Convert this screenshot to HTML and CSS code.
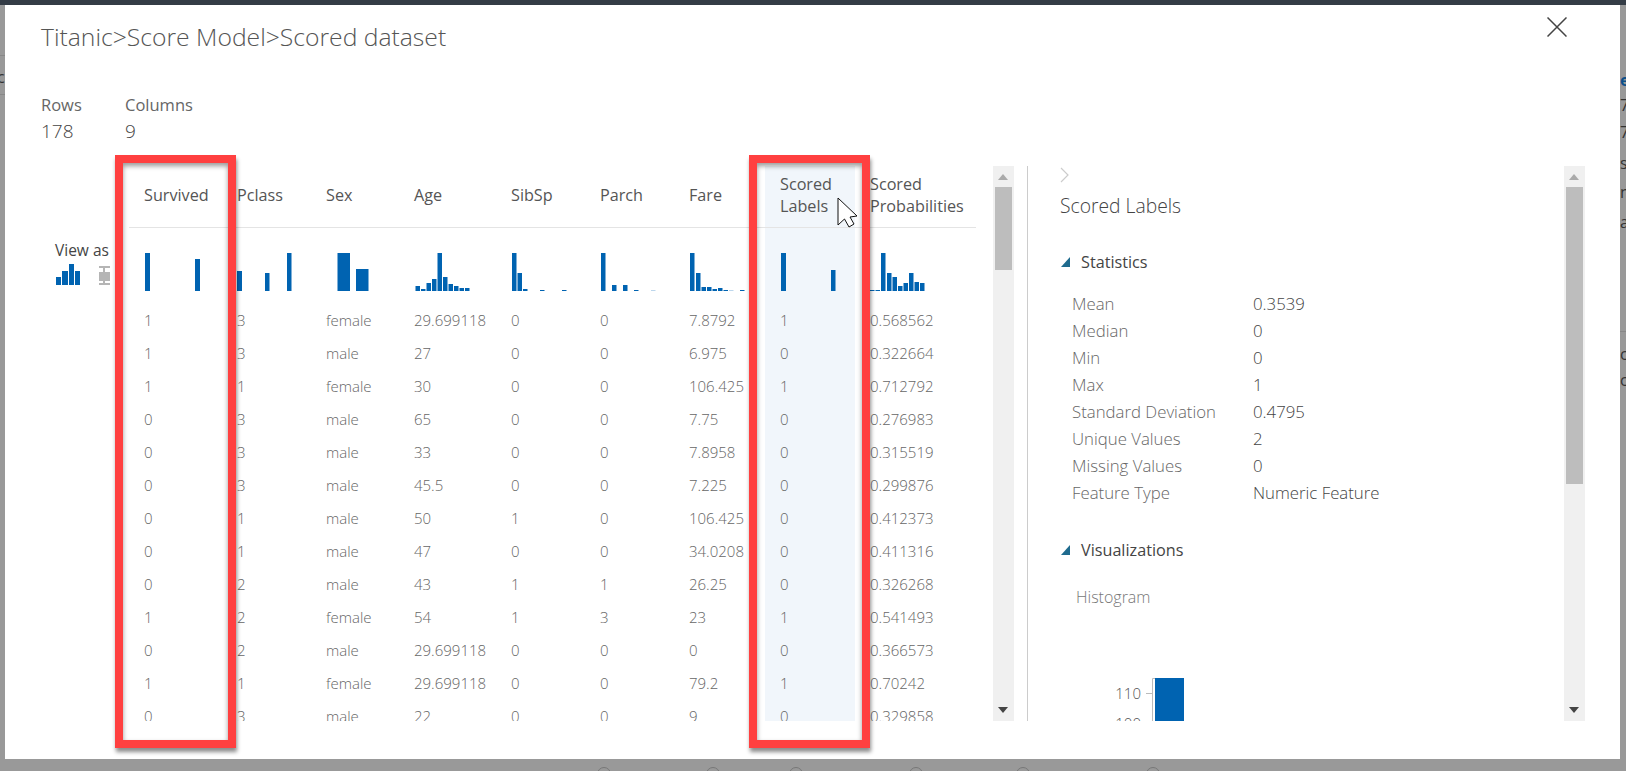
FILE: index.html
```html
<!DOCTYPE html>
<html lang="en">
<head>
    <meta charset="UTF-8">
    <title>Titanic - Scored dataset</title>
    <link rel="stylesheet" href="styles.css">
</head>
<body>
    <div class="backdrop">
        <span class="frag frag-cl">cl</span>
        <i class="rule rule-a"></i>
        <i class="rule rule-b"></i>
        <span class="frag frag-r link" style="top:70px">e</span>
        <span class="frag frag-r" style="top:95px">7</span>
        <span class="frag frag-r" style="top:122px">7</span>
        <span class="frag frag-r" style="top:153px">s</span>
        <span class="frag frag-r" style="top:182px">n</span>
        <span class="frag frag-r" style="top:212px">a</span>
        <i class="rule rule-c"></i>
        <span class="frag frag-r" style="top:344px">c</span>
        <span class="frag frag-r" style="top:370px">c</span>
        <i class="dock" style="left:597px"></i>
        <i class="dock" style="left:706px"></i>
        <i class="dock" style="left:789px"></i>
        <i class="dock" style="left:909px"></i>
        <i class="dock" style="left:1016px"></i>
        <i class="dock" style="left:1146px"></i>
    </div>

    <div class="topbar"></div>

    <div class="modal">
        <svg class="close" width="20" height="20" viewBox="0 0 20 20"><path d="M0.5 0.5L19.5 19.5M19.5 0.5L0.5 19.5" stroke="#444" stroke-width="1.5" fill="none"/></svg>
        <h1 class="title">Titanic&gt;Score Model&gt;Scored dataset</h1>

        <div class="counts">
            <div class="count count-rows"><div class="count-label">Rows</div><div class="count-value">178</div></div>
            <div class="count"><div class="count-label">Columns</div><div class="count-value">9</div></div>
        </div>

        <div class="content">
            <div class="view-as">
                <div class="view-label">View as</div>
                <div class="view-icons">
                    <svg width="25" height="22" viewBox="0 0 25 22" fill="#0063b1"><rect x="0" y="13" width="5" height="8"/><rect x="6" y="7" width="6" height="14"/><rect x="13" y="0" width="5" height="21"/><rect x="19" y="7" width="5" height="14"/></svg>
                    <svg class="box-icon" width="11" height="22" viewBox="0 0 11 22" fill="#b5b5b5"><rect x="0" y="2" width="11" height="2"/><rect x="4" y="2" width="2" height="19"/><rect x="0" y="8" width="11" height="9"/><rect x="0" y="19" width="11" height="2"/></svg>
                </div>
            </div>

            <div class="table-wrap">
                <table class="data">
                    <colgroup>
                        <col class="w93"><col class="w89"><col class="w88"><col class="w97"><col class="w89"><col class="w89"><col class="w91"><col class="w90"><col class="w121">
                    </colgroup>
                    <thead>
                        <tr>
                            <th>Survived</th><th>Pclass</th><th>Sex</th><th>Age</th><th>SibSp</th><th>Parch</th><th>Fare</th><th class="on">Scored<br>Labels</th><th>Scored<br>Probabilities</th>
                        </tr>
                    </thead>
                    <tbody>
                        <tr class="hists">
                            <td><svg class="hist"><rect x="16" y="0" width="5" height="38"/><rect x="66" y="6" width="5" height="32"/></svg></td>
                            <td><svg class="hist"><rect x="15" y="18" width="5" height="20"/><rect x="43" y="20" width="4.500" height="18"/><rect x="65" y="0" width="4.500" height="38"/></svg></td>
                            <td><svg class="hist"><rect x="26.500" y="0" width="12.500" height="38"/><rect x="45" y="16" width="12.500" height="22"/></svg></td>
                            <td><svg class="hist"><rect x="16.500" y="33" width="4.500" height="5"/><rect x="22" y="36" width="4.500" height="2"/><rect x="27.500" y="30" width="4.500" height="8"/><rect x="33" y="26" width="4.500" height="12"/><rect x="38.500" y="0" width="4.500" height="38"/><rect x="44" y="24" width="4.500" height="14"/><rect x="49.500" y="31" width="4.500" height="7"/><rect x="55" y="33" width="4.500" height="5"/><rect x="60.500" y="35" width="4.500" height="3"/><rect x="66" y="35" width="4.500" height="3"/></svg></td>
                            <td><svg class="hist"><rect x="16" y="0" width="4.500" height="38"/><rect x="21.500" y="20" width="4.500" height="18"/><rect x="27" y="36" width="4.500" height="2"/><rect x="44" y="37" width="4.500" height="1"/><rect x="66" y="37" width="4.500" height="1"/></svg></td>
                            <td><svg class="hist"><rect x="16" y="0" width="4.500" height="38"/><rect x="27" y="32" width="4.500" height="6"/><rect x="38" y="32" width="4.500" height="6"/><rect x="49" y="37" width="4.500" height="1"/><rect class="faint" x="66" y="37" width="4.500" height="1"/></svg></td>
                            <td><svg class="hist"><rect x="16" y="0" width="4.500" height="38"/><rect x="22" y="20" width="4.500" height="18"/><rect x="27.500" y="34" width="4.500" height="4"/><rect x="33" y="34" width="4.500" height="4"/><rect x="38.500" y="36" width="4.500" height="2"/><rect x="44" y="35" width="4.500" height="3"/><rect x="49.500" y="37" width="4.500" height="1"/><rect class="faint" x="55" y="37" width="4.500" height="1"/><rect x="66" y="37" width="4.500" height="1"/></svg></td>
                            <td class="on"><svg class="hist"><rect x="16" y="0" width="5" height="38"/><rect x="66" y="17" width="4.500" height="21"/></svg></td>
                            <td><svg class="hist"><rect x="15" y="37" width="4.500" height="1"/><rect x="20.500" y="37" width="4.500" height="1"/><rect x="26" y="0" width="4.500" height="38"/><rect x="32" y="20" width="4.500" height="18"/><rect x="37.500" y="24" width="4.500" height="14"/><rect x="43" y="33" width="4.500" height="5"/><rect x="48.500" y="30" width="4.500" height="8"/><rect x="54" y="20" width="4.500" height="18"/><rect x="59.500" y="29" width="4.500" height="9"/><rect x="65" y="30" width="4.500" height="8"/></svg></td>
                        </tr>
                        <tr><td>1</td><td>3</td><td>female</td><td>29.699118</td><td>0</td><td>0</td><td>7.8792</td><td class="on">1</td><td>0.568562</td></tr>
                        <tr><td>1</td><td>3</td><td>male</td><td>27</td><td>0</td><td>0</td><td>6.975</td><td class="on">0</td><td>0.322664</td></tr>
                        <tr><td>1</td><td>1</td><td>female</td><td>30</td><td>0</td><td>0</td><td>106.425</td><td class="on">1</td><td>0.712792</td></tr>
                        <tr><td>0</td><td>3</td><td>male</td><td>65</td><td>0</td><td>0</td><td>7.75</td><td class="on">0</td><td>0.276983</td></tr>
                        <tr><td>0</td><td>3</td><td>male</td><td>33</td><td>0</td><td>0</td><td>7.8958</td><td class="on">0</td><td>0.315519</td></tr>
                        <tr><td>0</td><td>3</td><td>male</td><td>45.5</td><td>0</td><td>0</td><td>7.225</td><td class="on">0</td><td>0.299876</td></tr>
                        <tr><td>0</td><td>1</td><td>male</td><td>50</td><td>1</td><td>0</td><td>106.425</td><td class="on">0</td><td>0.412373</td></tr>
                        <tr><td>0</td><td>1</td><td>male</td><td>47</td><td>0</td><td>0</td><td>34.0208</td><td class="on">0</td><td>0.411316</td></tr>
                        <tr><td>0</td><td>2</td><td>male</td><td>43</td><td>1</td><td>1</td><td>26.25</td><td class="on">0</td><td>0.326268</td></tr>
                        <tr><td>1</td><td>2</td><td>female</td><td>54</td><td>1</td><td>3</td><td>23</td><td class="on">1</td><td>0.541493</td></tr>
                        <tr><td>0</td><td>2</td><td>male</td><td>29.699118</td><td>0</td><td>0</td><td>0</td><td class="on">0</td><td>0.366573</td></tr>
                        <tr><td>1</td><td>1</td><td>female</td><td>29.699118</td><td>0</td><td>0</td><td>79.2</td><td class="on">1</td><td>0.70242</td></tr>
                        <tr><td>0</td><td>3</td><td>male</td><td>22</td><td>0</td><td>0</td><td>9</td><td class="on">0</td><td>0.329858</td></tr>
                    </tbody>
                </table>
            </div>

            <div class="scrollbar">
                <div class="arrow-up"></div>
                <div class="thumb thumb-short"></div>
                <div class="arrow-down"></div>
            </div>

            <div class="detail">
                <svg class="chevron" width="9" height="16" viewBox="0 0 9 16"><path d="M1 1L8 8L1 15" stroke="#ccc" stroke-width="1.2" fill="none"/></svg>
                <h2 class="detail-title">Scored Labels</h2>

                <h3 class="section"><svg width="9" height="10" viewBox="0 0 9 10"><path d="M9 0V10H0Z" fill="#1f6b8e"/></svg>Statistics</h3>
                <dl class="stats">
                    <dt>Mean</dt><dd>0.3539</dd>
                    <dt>Median</dt><dd>0</dd>
                    <dt>Min</dt><dd>0</dd>
                    <dt>Max</dt><dd>1</dd>
                    <dt>Standard Deviation</dt><dd>0.4795</dd>
                    <dt>Unique Values</dt><dd>2</dd>
                    <dt>Missing Values</dt><dd>0</dd>
                    <dt>Feature Type</dt><dd>Numeric Feature</dd>
                </dl>

                <h3 class="section section-vis"><svg width="9" height="10" viewBox="0 0 9 10"><path d="M9 0V10H0Z" fill="#1f6b8e"/></svg>Visualizations</h3>
                <div class="chart-label">Histogram</div>
                <svg class="chart" width="110" height="60" viewBox="0 0 110 60">
                    <path d="M61 0.500H58.500V60M52 15.500H58.500M52 45.500H58.500" stroke="#bbb" fill="none"/>
                    <text class="tick" x="47" y="21">110</text>
                    <text class="tick" x="47" y="51">100</text>
                    <rect x="61" y="0" width="29" height="60" fill="#0063b1"/>
                </svg>
            </div>

            <div class="scrollbar">
                <div class="arrow-up"></div>
                <div class="thumb thumb-long"></div>
                <div class="arrow-down"></div>
            </div>
        </div>
    </div>

    <div class="callout callout-survived"></div>
    <div class="callout callout-labels"></div>
    <svg class="cursor" width="21" height="31" viewBox="0 0 21 31"><path d="M1 1V28L7.500 22L12 30L17 27L13 20L20 19Z" fill="#fff" stroke="#111" stroke-width="1"/></svg>
</body>
</html>
```

FILE: styles.css
```css
* { box-sizing: border-box; }
html, body { height: 100%; }
body {
    margin: 0;
    overflow: hidden;
    position: relative;
    background-color: #999;
    font-family: "Open Sans", sans-serif;
    color: #555;
}

/* stuff from the page behind the dialog */
.backdrop { position: absolute; inset: 0; overflow: hidden; }
.frag { position: absolute; font-size: 16px; line-height: 20px; color: #333; }
.frag-cl { left: -3px; top: 67px; }
.frag-r { left: 1620px; }
.link { color: #0b4f8a; font-weight: 700; }
.rule { position: absolute; display: block; height: 1px; background-color: #888; }
.rule-a { left: 0; top: 55px; width: 5px; }
.rule-b { left: 0; top: 94px; width: 5px; }
.rule-c { left: 1620px; top: 331px; width: 6px; }
.dock {
    position: absolute;
    top: 767px;
    width: 14px;
    height: 14px;
    border: 1px solid #777;
    border-radius: 50%;
}

.topbar { position: relative; height: 5px; background-color: #343c46; }

.modal {
    position: relative;
    width: 1615px;
    height: 754px;
    margin-left: 5px;
    background-color: #fff;
}
.close { position: absolute; left: 1542px; top: 12px; }
.title {
    margin: 0;
    padding: 16px 0 0 36px;
    font-size: 24.7px;
    line-height: 32px;
    font-weight: 300;
    color: #555;
}

.counts { display: flex; margin: 39px 0 0 36px; }
.count { min-width: 84px; }
.count-label { font-size: 16.5px; line-height: 26px; color: #666; }
.count-value { font-size: 19px; line-height: 26px; font-weight: 300; color: #444; }

.content { display: flex; height: 555px; margin-top: 22px; }

.view-as { width: 124px; padding: 74px 0 0 50px; white-space: nowrap; }
.view-label { font-size: 15.5px; line-height: 20px; color: #444; }
.view-icons { display: flex; gap: 18px; margin: 4px 0 0 1px; }

.table-wrap { width: 864px; height: 555px; overflow: hidden; }
.data { width: 847px; table-layout: fixed; border-collapse: collapse; }
.w88 { width: 88px; }
.w89 { width: 89px; }
.w90 { width: 90px; }
.w91 { width: 91px; }
.w93 { width: 93px; }
.w97 { width: 97px; }
.w121 { width: 121px; }
.data th {
    height: 61px;
    padding: 0 0 3px 15px;
    border-bottom: 1px solid #e4e4e4;
    font-size: 16.2px;
    line-height: 22px;
    font-weight: 400;
    text-align: left;
    color: #555;
    white-space: nowrap;
}
.data td {
    height: 33px;
    padding: 0 0 0 15px;
    font-size: 15px;
    font-weight: 300;
    color: #666;
    white-space: nowrap;
}
.data .on { background-color: #f1f6fb; }
.hists td { height: 76px; padding: 25px 0 0 0; vertical-align: top; }
.hist { display: block; width: 100%; height: 38px; fill: #0063b1; }
.hist .faint { fill: #bcd6ec; }

.scrollbar {
    position: relative;
    width: 21px;
    flex-shrink: 0;
    padding: 21px 2px 0;
    background-color: #f0f0f0;
}
.thumb { background-color: #bdbdbd; }
.thumb-short { height: 83px; }
.thumb-long { height: 297px; }
.arrow-up, .arrow-down {
    position: absolute;
    left: 5px;
    width: 0;
    height: 0;
    border-left: 5px solid transparent;
    border-right: 5px solid transparent;
}
.arrow-up { top: 8px; border-bottom: 6px solid #aaa; }
.arrow-down { bottom: 8px; border-top: 6px solid #444; }

.detail {
    width: 537px;
    height: 555px;
    margin-left: 13px;
    padding-left: 32px;
    border-left: 1px solid #ccc;
    overflow: hidden;
}
.chevron { display: block; margin-top: 1px; }
.detail-title {
    margin: 11px 0 0;
    font-size: 19.3px;
    line-height: 24px;
    font-weight: 300;
    color: #444;
}
.section {
    display: flex;
    align-items: center;
    gap: 11px;
    margin: 32px 0 0 1px;
    font-size: 16.2px;
    line-height: 24px;
    font-weight: 500;
    color: #444;
}
.section-vis { margin-top: 32px; }
.stats {
    display: grid;
    grid-template-columns: 181px 1fr;
    grid-auto-rows: 27px;
    margin: 16px 0 0 12px;
    font-size: 16.8px;
    line-height: 27px;
}
.stats dt { font-weight: 300; color: #666; }
.stats dd { margin: 0; color: #444; font-weight: 300; }
.chart-label { margin: 25px 0 0 16px; font-size: 16px; line-height: 20px; font-weight: 300; color: #777; }
.chart { display: block; margin: 71px 0 0 34px; }
.tick { font-family: "Open Sans", sans-serif; font-size: 15px; font-weight: 300; fill: #555; text-anchor: end; }

/* red annotation boxes drawn on top of the screenshot */
.callout {
    position: absolute;
    top: 155px;
    width: 121px;
    height: 593px;
    border: 8px solid #ff4040;
    box-shadow: 1px 4px 4px rgba(0, 0, 0, 0.45), inset 0 3px 5px rgba(0, 0, 0, 0.4);
}
.callout-survived { left: 115px; }
.callout-labels { left: 749px; }
.cursor { position: absolute; left: 837px; top: 197px; }
```
